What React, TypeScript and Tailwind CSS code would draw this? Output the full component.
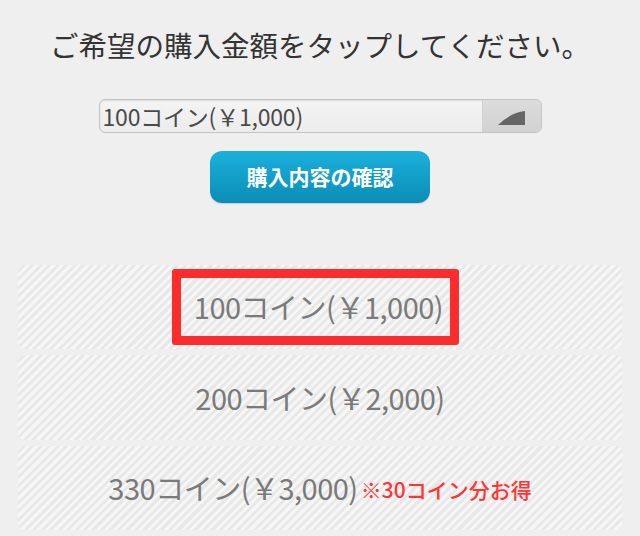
import React from "react";

const stripe =
  "bg-[repeating-linear-gradient(135deg,#f6f6f6_0px,#f6f6f6_3px,#e8e8e8_3px,#e8e8e8_6px)]";

export default function App() {
  const font = { fontFamily: '"Noto Sans CJK JP", "Noto Sans", sans-serif' };
  return (
    <div
      className="w-[640px] h-[536px] bg-[#efefef] flex flex-col items-center overflow-hidden"
      style={font}
    >
      <div className="mt-[27px] h-[36px] leading-[36px] text-[28.5px] text-[#333333]">
        ご希望の購入金額をタップしてください。
      </div>

      <div className="mt-[36px] w-[443px] h-[34px] flex rounded-[6px] border border-[#c4c4c4] overflow-hidden bg-[linear-gradient(#f4f4f4,#ececec)] shadow-[inset_0_1px_2px_rgba(0,0,0,0.1)]">
        <div className="flex-1 flex items-center pl-[3px] text-[23px] leading-none text-[#4a4a4a] tracking-[-0.2px]">
          100コイン(￥1,000)
        </div>
        <div className="w-[59px] h-full border-l border-[#d0d0d0] bg-[linear-gradient(#dcdcdc,#d2d2d2)] flex items-end justify-center pb-[7px]">
          <svg width="27" height="14" viewBox="0 0 27 14">
            <path d="M0 14 Q12 2 27 0 L27 14 Z" fill="#666666" />
          </svg>
        </div>
      </div>

      <div className="mt-[18px] w-[220px] h-[52px] rounded-[12px] bg-[linear-gradient(#1cb0dc,#0a8db6)] flex items-center justify-center text-white text-[21px] font-bold shadow-[0_1px_1px_rgba(0,0,0,0.15)]">
        購入内容の確認
      </div>

      <div className="mt-[62px] w-[604px] flex flex-col gap-[6px]">
        <div className={`h-[84px] rounded-[6px] ${stripe} flex items-center pl-[154px]`}>
          <div className="w-[287px] h-[76px] border-[9px] border-[#fd2b2b] rounded-[3px] flex items-center justify-center text-[29px] text-[#7a7a7a] tracking-[-0.5px] pl-[6px]">
            100コイン(￥1,000)
          </div>
        </div>
        <div className={`h-[85px] rounded-[6px] ${stripe} flex items-center justify-center text-[29px] text-[#7a7a7a] tracking-[-0.5px]`}>
          200コイン(￥2,000)
        </div>
        <div className={`h-[84px] rounded-[6px] ${stripe} flex items-center justify-center`}>
          <span className="text-[29px] text-[#7a7a7a] tracking-[-0.5px]">330コイン(￥3,000)</span>
          <span className="ml-[3px] text-[21px] font-medium text-[#ff3434] mt-[3px]">※30コイン分お得</span>
        </div>
      </div>
    </div>
  );
}
